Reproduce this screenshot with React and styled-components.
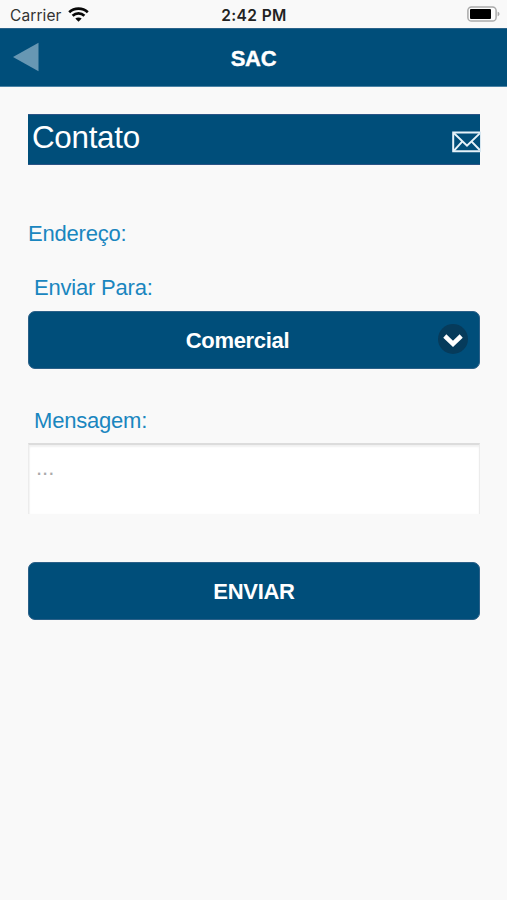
import React from "react";
import styled, { createGlobalStyle } from "styled-components";

const GlobalStyle = createGlobalStyle`
  * { box-sizing: border-box; }
  body {
    margin: 0;
    background: #f9f9f9;
    font-family: "Liberation Sans", Arial, sans-serif;
  }
`;

const Screen = styled.div`
  width: 507px;
  height: 900px;
  overflow: hidden;
  background: #f9f9f9;
`;

const StatusBar = styled.div`
  display: grid;
  grid-template-columns: 1fr auto 1fr;
  align-items: center;
  height: 28px;
  padding: 2px 7px 0 10px;
  font-family: Inter, sans-serif;
  font-size: 15.5px;
  line-height: 26px;
  color: #333;
`;

const Carrier = styled.div`
  display: flex;
  align-items: center;
  gap: 6px;
  padding-top: 1px;
  letter-spacing: 0.1px;
`;

const WifiIcon = styled.svg`
  margin-top: -3px;
`;

const Clock = styled.div`
  margin-left: -2px;
  padding-top: 1px;
  font-weight: 600;
  letter-spacing: 0.4px;
  color: #222;
`;

const Battery = styled.svg`
  justify-self: end;
  margin-top: -4px;
`;

const Header = styled.header`
  display: grid;
  grid-template-columns: 1fr auto 1fr;
  align-items: center;
  height: 59px;
  padding: 1px 13px 0;
  background: #004e7a;
  border-top: 1px solid #2b638a;
  border-bottom: 1px solid #4b83a5;
`;

const HeaderTitle = styled.h1`
  margin: 2px 0 0;
  font-size: 22px;
  line-height: 26px;
  letter-spacing: -0.3px;
  color: #fff;
  -webkit-text-stroke: 0.4px #fff;
`;

const BackIcon = styled.svg`
  display: block;
  margin-top: -2px;
`;

const Content = styled.main`
  display: flex;
  flex-direction: column;
  padding: 27px 27px 0 28px;
`;

const SectionBar = styled.div`
  display: flex;
  justify-content: space-between;
  height: 51px;
  padding-left: 4px;
  background: #004e7a;
  border: solid #2b5485;
  border-width: 1px 0;
`;

const SectionTitle = styled.h2`
  margin: 5px 0 0;
  font-size: 31.4px;
  line-height: 36px;
  letter-spacing: -0.3px;
  font-weight: 400;
  color: #fff;
`;

const MailIcon = styled.svg`
  margin: 16px -2px 0 0;
`;

const Label = styled.label`
  margin: ${(p) => p.$gap}px 0 0 ${(p) => p.$indent || 0}px;
  font-size: 22px;
  line-height: 26px;
  letter-spacing: -0.2px;
  color: #1a86bf;
`;

const Button = styled.button`
  display: grid;
  grid-template-columns: 1fr auto 1fr;
  align-items: center;
  width: 100%;
  height: 58px;
  margin: ${(p) => p.$gap}px 0 0;
  padding: 1px 11px 0;
  border: 1px solid #2b6088;
  border-radius: 7px;
  background: #004e7a;
  color: #fff;
  font: bold 22px/26px "Liberation Sans", Arial, sans-serif;
  letter-spacing: -0.3px;
`;

const ButtonText = styled.span`
  grid-column: 2;
  transform: translateX(${(p) => p.$shift || 0}px);
`;

const ChevronIcon = styled.svg`
  justify-self: end;
  margin-top: -3px;
`;

const MessageField = styled.textarea`
  display: block;
  width: 100%;
  height: 71px;
  margin: 9px 0 0;
  padding: 10px 7px;
  border: solid #ececec;
  border-width: 2px 1px 0;
  border-top-color: #dcdcdc;
  border-radius: 0;
  outline: none;
  resize: none;
  overflow: hidden;
  background: #fff;
  box-shadow: inset 0 2px 2px #f1f1f1, inset 1px 0 1px #f5f5f5;
  font: 22px/26px "Liberation Sans", Arial, sans-serif;
  color: #333;

  &::placeholder {
    color: #aaa;
    opacity: 1;
  }
`;

export default function App() {
  return (
    <Screen>
      <GlobalStyle />
      <StatusBar>
        <Carrier>
          Carrier
          <WifiIcon width="21" height="15" viewBox="0 0 21 15">
            <g fill="none" stroke="#080808" strokeWidth="2.7">
              <path d="M1.2 5.2C6.3 0.5 14.7 0.5 19.8 5.2" />
              <path d="M4.6 8.7C8 5.5 13 5.5 16.4 8.7" />
            </g>
            <path d="M10.5 14.8L7.3 11.6C9 10 12 10 13.7 11.6Z" fill="#080808" />
          </WifiIcon>
        </Carrier>
        <Clock>2:42 PM</Clock>
        <Battery width="33" height="16" viewBox="0 0 33 16">
          <rect x="0.9" y="0.9" width="28.2" height="14.2" rx="3.6" fill="#fcfcfc" stroke="#aaa" strokeWidth="1.5" />
          <rect x="3" y="3" width="21" height="10" rx="1" fill="#000" />
          <path d="M30.6 5.8C33.1 6.3 33.1 9.7 30.6 10.2Z" fill="#aaa" />
        </Battery>
      </StatusBar>
      <Header>
        <BackIcon width="26" height="30" viewBox="0 0 26 30">
          <path d="M0 15L25.5 0.8V29.2Z" fill="#6797b3" />
        </BackIcon>
        <HeaderTitle>SAC</HeaderTitle>
      </Header>
      <Content>
        <SectionBar>
          <SectionTitle>Contato</SectionTitle>
          <MailIcon width="30" height="22" viewBox="0 0 30 22">
            <g fill="none" stroke="#e5f2f9" strokeWidth="2">
              <path d="M28 1.5H1.2V20.3H28" />
              <path d="M2 2.2L15 14.6L27.8 2.4M2 19.6L10.4 10.4M27.8 19L19.4 10.4" />
            </g>
            <path d="M28.5 0.6V21.2" stroke="#d6e6f0" strokeWidth="1" />
          </MailIcon>
        </SectionBar>
        <Label as="p" $gap={56}>Endereço:</Label>
        <Label $gap={28} $indent={6} htmlFor="department">Enviar Para:</Label>
        <Button id="department" type="button" $gap={10}>
          <ButtonText $shift={-16.5}>Comercial</ButtonText>
          <ChevronIcon width="30" height="30" viewBox="0 0 30 30">
            <circle cx="15" cy="15" r="15" fill="#063b5b" />
            <path d="M6.8 12L15 19.8L23.2 12" fill="none" stroke="#fff" strokeWidth="4.5" />
          </ChevronIcon>
        </Button>
        <Label $gap={39} $indent={6} htmlFor="message">Mensagem:</Label>
        <MessageField id="message" placeholder="..." />
        <Button type="button" $gap={48}>
          <ButtonText>ENVIAR</ButtonText>
        </Button>
      </Content>
    </Screen>
  );
}
